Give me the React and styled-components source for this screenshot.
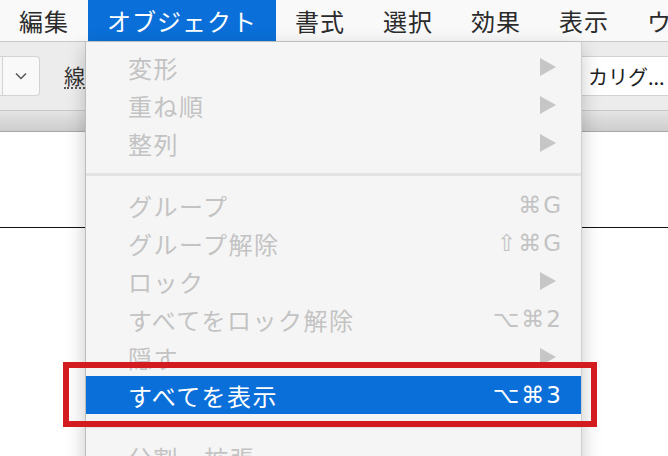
import React from "react";
import styled, { createGlobalStyle } from "styled-components";

const GlobalStyle = createGlobalStyle`
  html, body {
    margin: 0;
    padding: 0;
    background: #ffffff;
    overflow: hidden;
  }
  body {
    font-family: "Noto Sans CJK JP", "DejaVu Sans", sans-serif;
  }
`;

const menuTitles = ["編集", "オブジェクト", "書式", "選択", "効果", "表示", "ウィンドウ"];

const menuGroups = [
  [
    { label: "変形", sub: true },
    { label: "重ね順", sub: true },
    { label: "整列", sub: true },
  ],
  [
    { label: "グループ", keys: "⌘G" },
    { label: "グループ解除", keys: "⇧⌘G" },
    { label: "ロック", sub: true },
    { label: "すべてをロック解除", keys: "⌥⌘2" },
    { label: "隠す", sub: true },
    { label: "すべてを表示", keys: "⌥⌘3", active: true },
  ],
  [{ label: "分割・拡張" }],
];

const Page = styled.div`
  position: relative;
  width: 668px;
  height: 456px;
  overflow: hidden;
  background: #fff;
`;

const MenuBar = styled.div`
  display: flex;
  height: 41px;
  background: #f9f9f9;
  border-bottom: 1px solid #c9c9c9;
  white-space: nowrap;
`;

const MenuTitle = styled.div`
  display: flex;
  align-items: center;
  padding: 0 19px;
  font-size: 24px;
  letter-spacing: 1px;
  color: ${(p) => (p.$active ? "#ffffff" : "#2b2b2b")};
  background: ${(p) => (p.$active ? "#0a6fd8" : "transparent")};
`;

const Toolbar = styled.div`
  display: flex;
  align-items: center;
  height: 68px;
  background: #ececec;
  border-bottom: 1px solid #c8c8c8;
`;

const Dropdown = styled.div`
  display: flex;
  height: 40px;
  box-sizing: border-box;
`;

const FieldEdge = styled.div`
  width: 2px;
  border: 1px solid #d3d3d3;
  border-left: none;
  background: #f6f6f6;
`;

const ChevronButton = styled.div`
  display: flex;
  align-items: center;
  justify-content: center;
  width: 36px;
  border: 1px solid #d3d3d3;
  border-left: none;
  border-radius: 0 4px 4px 0;
  background: #f9f9f9;
  color: #555;
`;

const StrokeLabel = styled.span`
  margin-left: 24px;
  font-size: 21px;
  color: #333;
  border-bottom: 2px dotted #555;
  line-height: 24px;
`;

const FontField = styled.div`
  margin-left: auto;
  display: flex;
  align-items: center;
  width: 94px;
  height: 40px;
  box-sizing: border-box;
  padding-left: 14px;
  background: #ffffff;
  border-top: 1px solid #d2d2d2;
  border-bottom: 1px solid #d2d2d2;
  font-size: 20px;
  color: #1c1c1c;
  white-space: nowrap;
  overflow: hidden;
`;

const TabStrip = styled.div`
  height: 20px;
  background: linear-gradient(#e4e4e4, #cdcdcd);
  border-bottom: 1px solid #a8a8a8;
`;

const Canvas = styled.div`
  height: 95px;
  border-bottom: 1px solid #111;
`;

const Menu = styled.div`
  position: absolute;
  top: 42px;
  left: 85px;
  width: 495px;
  bottom: -40px;
  padding-top: 6px;
  background: #f5f5f5;
  border-left: 1px solid #bdbdbd;
  border-right: 1px solid #cfcfcf;
  box-shadow: 0 6px 18px rgba(0, 0, 0, 0.22);
`;

const Item = styled.div`
  display: flex;
  align-items: center;
  height: 38px;
  padding: 0 18px 0 42px;
  font-size: 24px;
  letter-spacing: 1.5px;
  white-space: nowrap;
  color: ${(p) => (p.$active ? "#ffffff" : "#c3c3c3")};
  background: ${(p) => (p.$active ? "#0a6fd8" : "transparent")};
`;

const Label = styled.span`
  flex: 1;
`;

const Keys = styled.span`
  font-family: "DejaVu Sans", "Noto Sans CJK JP", sans-serif;
  font-size: 23px;
  letter-spacing: 2px;
`;

const Arrow = styled.svg`
  width: 16px;
  height: 18px;
  margin-right: 7px;
  fill: #c6c6c6;
`;

const Separator = styled.div`
  height: 3px;
  margin: 11px 0 10px;
  background: #e3e3e3;
`;

const Callout = styled.div`
  position: absolute;
  left: 63px;
  top: 362px;
  width: 534px;
  height: 65px;
  box-sizing: border-box;
  border: 6px solid #d21c20;
`;

const App = () => {
  return (
    <Page>
      <GlobalStyle />
      <MenuBar>
        {menuTitles.map((t) => (
          <MenuTitle key={t} $active={t === "オブジェクト"}>
            {t}
          </MenuTitle>
        ))}
      </MenuBar>
      <Toolbar>
        <Dropdown>
          <FieldEdge />
          <ChevronButton>
            <svg width="12" height="8" viewBox="0 0 12 8">
              <path d="M1 1.5 6 6.5 11 1.5" fill="none" stroke="#555" strokeWidth="1.5" />
            </svg>
          </ChevronButton>
        </Dropdown>
        <StrokeLabel>線</StrokeLabel>
        <FontField>カリグ...</FontField>
      </Toolbar>
      <TabStrip />
      <Canvas />
      <Menu>
        {menuGroups.map((group, gi) => (
          <React.Fragment key={gi}>
            {gi > 0 && <Separator />}
            {group.map((item) => (
              <Item key={item.label} $active={item.active}>
                <Label>{item.label}</Label>
                {item.keys && <Keys>{item.keys}</Keys>}
                {item.sub && (
                  <Arrow viewBox="0 0 16 18">
                    <polygon points="0,0 16,9 0,18" />
                  </Arrow>
                )}
              </Item>
            ))}
          </React.Fragment>
        ))}
      </Menu>
      <Callout />
    </Page>
  );
};

export default App;
